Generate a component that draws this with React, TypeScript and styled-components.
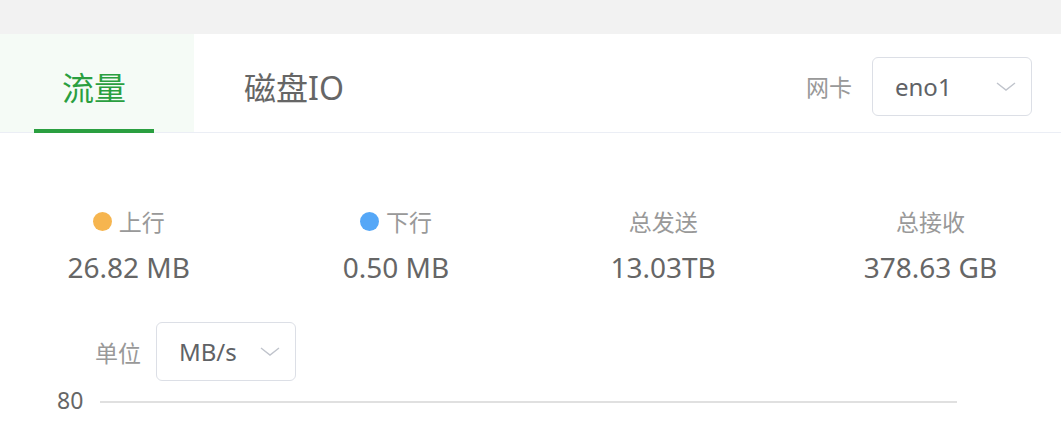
import React from 'react';
import styled, { createGlobalStyle } from 'styled-components';

const GlobalStyle = createGlobalStyle`
  html, body {
    margin: 0;
    padding: 0;
    background: #f2f2f2;
    font-family: "Noto Sans", "Noto Sans CJK SC", sans-serif;
  }
`;

const Page = styled.div`
  padding-top: 34px;
  height: 431px;
  box-sizing: border-box;
  overflow: hidden;
`;

const Panel = styled.section`
  background: #fff;
  height: 100%;
`;

const Header = styled.header`
  display: flex;
  align-items: stretch;
  height: 98px;
  border-bottom: 1px solid #ebeef5;
`;

const Tab = styled.div<{ $active?: boolean }>`
  position: relative;
  display: flex;
  align-items: center;
  justify-content: center;
  width: 120px;
  padding: 0 40px;
  font-size: 32px;
  color: ${({ $active }) => ($active ? '#2a9f40' : '#666')};
  background: ${({ $active }) => ($active ? '#f5fbf6' : 'transparent')};
  padding-top: 6px;

  &:first-child {
    padding-left: 34px;
  }

  &::after {
    content: '';
    display: ${({ $active }) => ($active ? 'block' : 'none')};
    position: absolute;
    left: 34px;
    bottom: -1px;
    width: 120px;
    height: 4px;
    background: #2a9f40;
  }
`;

const HeaderRight = styled.div`
  margin-left: auto;
  display: flex;
  align-items: center;
  gap: 20px;
  padding-right: 29px;
  padding-top: 6px;
`;

const FieldLabel = styled.span`
  font-size: 23px;
  color: #999;
`;

const Select = styled.div<{ $width: number }>`
  display: flex;
  align-items: center;
  justify-content: space-between;
  box-sizing: border-box;
  width: ${({ $width }) => $width}px;
  height: 59px;
  padding: 0 15px 0 22px;
  border: 1px solid #dcdfe6;
  border-radius: 6px;
  font-size: 24px;
  color: #606266;
`;

const Chevron = () => (
  <svg width="20" height="9" viewBox="0 0 20 9">
    <polyline points="1,1 10,8 19,1" fill="none" stroke="#c0c4cc" strokeWidth="1.4" />
  </svg>
);

const Stats = styled.div`
  display: flex;
  width: calc(100% + 8px);
  margin-left: -5px;
  padding-top: 72px;
`;

const Stat = styled.div`
  flex: 1;
  display: flex;
  flex-direction: column;
  align-items: center;
  gap: 12px;
`;

const StatLabel = styled.div`
  display: flex;
  align-items: center;
  gap: 7px;
  height: 32px;
  font-size: 23px;
  color: #999;
`;

const Dot = styled.span<{ $color: string }>`
  width: 19px;
  height: 19px;
  border-radius: 50%;
  background: ${({ $color }) => $color};
`;

const StatValue = styled.div`
  height: 36px;
  line-height: 36px;
  font-size: 28px;
  color: #666;
`;

const UnitRow = styled.div`
  display: flex;
  align-items: center;
  gap: 15px;
  margin-top: 37px;
  padding-left: 95px;
`;

const Chart = styled.div`
  display: flex;
  align-items: center;
  gap: 17px;
  margin-top: 7px;
  padding-left: 57px;
  width: 900px;
`;

const AxisLabel = styled.span`
  font-size: 23px;
  line-height: 24px;
  color: #666;
`;

const GridLine = styled.div`
  flex: 1;
  height: 2px;
  margin-top: 4px;
  background: #e0e0e0;
`;

const stats = [
  { label: '上行', value: '26.82 MB', dot: '#f6b54f' },
  { label: '下行', value: '0.50 MB', dot: '#55a7f7' },
  { label: '总发送', value: '13.03TB' },
  { label: '总接收', value: '378.63 GB' },
];

export default function App() {
  return (
    <>
      <GlobalStyle />
      <Page>
        <Panel>
          <Header>
            <Tab $active>流量</Tab>
            <Tab>磁盘IO</Tab>
            <HeaderRight>
              <FieldLabel>网卡</FieldLabel>
              <Select $width={160}>
                <span>eno1</span>
                <Chevron />
              </Select>
            </HeaderRight>
          </Header>

          <Stats>
            {stats.map((s) => (
              <Stat key={s.label}>
                <StatLabel>
                  {s.dot && <Dot $color={s.dot} />}
                  {s.label}
                </StatLabel>
                <StatValue>{s.value}</StatValue>
              </Stat>
            ))}
          </Stats>

          <UnitRow>
            <FieldLabel>单位</FieldLabel>
            <Select $width={140}>
              <span>MB/s</span>
              <Chevron />
            </Select>
          </UnitRow>

          <Chart>
            <AxisLabel>80</AxisLabel>
            <GridLine />
          </Chart>
        </Panel>
      </Page>
    </>
  );
}
